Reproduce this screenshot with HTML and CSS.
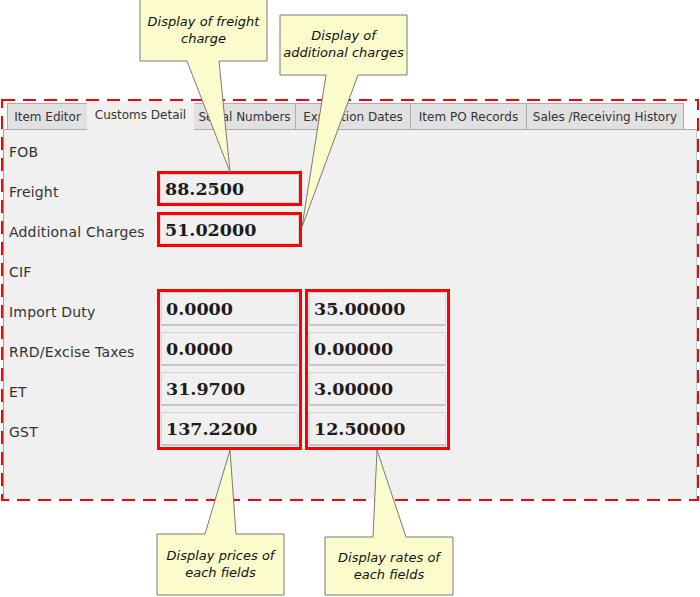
FILE: index.html
```html
<!DOCTYPE html>
<html>
<head>
<meta charset="utf-8">
<link rel="stylesheet" href="styles.css">
</head>
<body>
<div class="frame">
  <div class="tabs">
    <div class="tab tab-w1">Item Editor</div>
    <div class="tab tab-active tab-w2">Customs Detail</div>
    <div class="tab tab-w3">Serial Numbers</div>
    <div class="tab tab-w4">Expiration Dates</div>
    <div class="tab tab-w5">Item PO Records</div>
    <div class="tab tab-w6">Sales /Receiving History</div>
  </div>
  <div class="panel">
    <div class="row"><span class="label">FOB</span></div>
    <div class="row"><span class="label">Freight</span><div class="single single-up"><div class="field">88.2500</div></div></div>
    <div class="row"><span class="label">Additional Charges</span><div class="single single-top"><div class="field">51.02000</div></div></div>
    <div class="row"><span class="label">CIF</span></div>
    <div class="group-row">
      <div class="labels">
        <div class="row"><span class="label">Import Duty</span></div>
        <div class="row"><span class="label">RRD/Excise Taxes</span></div>
        <div class="row"><span class="label">ET</span></div>
        <div class="row"><span class="label">GST</span></div>
      </div>
      <div class="group">
        <div class="gfield">0.0000</div>
        <div class="gfield">0.0000</div>
        <div class="gfield">31.9700</div>
        <div class="gfield">137.2200</div>
      </div>
      <div class="group">
        <div class="gfield">35.00000</div>
        <div class="gfield">0.00000</div>
        <div class="gfield">3.00000</div>
        <div class="gfield">12.50000</div>
      </div>
    </div>
  </div>
</div>
<svg class="overlay" width="700" height="597" viewBox="0 0 700 597">
  <rect class="dash" x="2" y="100" width="696" height="400"/>
  <polygon class="callout" points="140,-1 267,-1 267,61 219,61 230,172 187,61 140,61"/>
  <text class="ctext" x="203.5" y="26">Display of freight</text>
  <text class="ctext" x="203.5" y="43">charge</text>
  <polygon class="callout" points="280,15 407,15 407,75 358,75 302,227 326,75 280,75"/>
  <text class="ctext" x="343.5" y="40">Display of</text>
  <text class="ctext" x="343.5" y="57">additional charges</text>
  <polygon class="callout" points="157,534 205,534 230,450 236,534 284,534 284,595 157,595"/>
  <text class="ctext" x="220.5" y="560">Display prices of</text>
  <text class="ctext" x="220.5" y="577">each fields</text>
  <polygon class="callout" points="325,537 373,537 377,450 406,537 453,537 453,595 325,595"/>
  <text class="ctext" x="389" y="561.5">Display rates of</text>
  <text class="ctext" x="389" y="578.5">each fields</text>
</svg>
</body>
</html>
```
FILE: styles.css
```css
html, body {
  margin: 0;
  padding: 0;
}
body {
  width: 700px;
  height: 597px;
  background: #ffffff;
  position: relative;
  overflow: hidden;
  font-family: "DejaVu Sans", Verdana, sans-serif;
  color: #2e2e2e;
}
.frame {
  margin-top: 101px;
  margin-left: 3px;
  width: 694px;
  height: 398px;
  display: flex;
  flex-direction: column;
}
.tabs {
  height: 28px;
  display: flex;
  align-items: flex-end;
  padding-left: 4px;
  background: #fafafa;
  flex: none;
}
.tab {
  box-sizing: border-box;
  height: 26px;
  border: 1px solid #acacac;
  border-bottom: none;
  margin-left: -1px;
  background: #e1e1e1;
  font-size: 12px;
  color: #333;
  display: flex;
  align-items: center;
  justify-content: center;
  white-space: nowrap;
}
.tab-active {
  height: 29px;
  margin-bottom: -1px;
  background: #f0f0f0;
  border-color: #f0f0f0;
  position: relative;
  z-index: 1;
  padding-bottom: 3px;
}
.tab-w1 { width: 81px; margin-left: 0; }
.tab-w2 { width: 107px; }
.tab-w3 { width: 103px; }
.tab-w4 { width: 116px; }
.tab-w5 { width: 117px; }
.tab-w6 { width: 158px; }
.panel {
  flex: 1;
  background: #f0f0f0;
  border-top: 1px solid #acacac;
  border-left: 1px solid #a0a0a0;
  border-right: 1px solid #c8c8c8;
  padding-top: 2px;
  padding-left: 5px;
}
.row {
  height: 40px;
  display: flex;
  align-items: center;
}
.label {
  width: 148px;
  flex: none;
  font-size: 14px;
  letter-spacing: 0.2px;
  color: #333;
  white-space: nowrap;
}
.single {
  box-sizing: border-box;
  width: 145px;
  height: 35px;
  border: 3px solid #ff0000;
  align-self: flex-start;
}
.single-up { margin-top: -1px; }
.single-top { margin-top: 0; }
.field, .gfield {
  box-sizing: border-box;
  background: #f0f0f0;
  display: flex;
  align-items: center;
  font-family: "DejaVu Serif", Georgia, serif;
  font-weight: bold;
  font-size: 17.5px;
  color: #1c1c1c;
}
.field {
  height: 100%;
  border: 1px solid #d6d6d6;
  padding-left: 4px;
}
.group-row {
  display: flex;
  align-items: flex-start;
}
.labels {
  width: 148px;
  flex: none;
}
.group {
  box-sizing: border-box;
  width: 145px;
  border: 3px solid #ff0000;
  padding: 0 1px 1px 1px;
  margin-top: -3px;
}
.group + .group { margin-left: 3px; }
.gfield {
  height: 34px;
  margin-bottom: 6px;
  border-top: 1px solid #d2d2d2;
  border-left: 1px solid #d8d8d8;
  border-right: 1px solid #d8d8d8;
  border-bottom: 2px solid #c6c6c6;
  padding-left: 4px;
}
.gfield:last-child { margin-bottom: 0; }
.overlay {
  position: absolute;
  left: 0;
  top: 0;
}
.dash {
  fill: none;
  stroke: #ff0000;
  stroke-width: 2;
  stroke-dasharray: 13 8;
}
.callout {
  fill: #fbfbcb;
  stroke: #7a7a7a;
  stroke-width: 1;
}
.ctext {
  font-family: "DejaVu Sans", Verdana, sans-serif;
  font-style: italic;
  font-size: 13px;
  fill: #111;
  text-anchor: middle;
}
```
